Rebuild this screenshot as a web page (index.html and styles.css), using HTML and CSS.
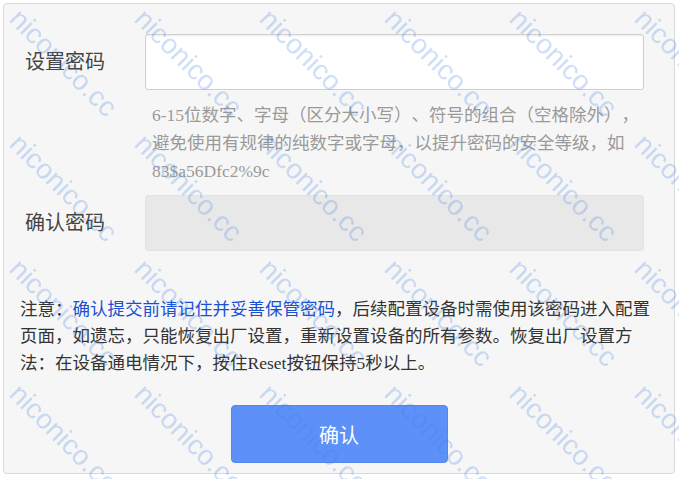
FILE: index.html
```html
<!DOCTYPE html>
<html lang="zh-CN">
<head>
<meta charset="utf-8">
<title>设置密码</title>
<link rel="stylesheet" href="styles.css">
</head>
<body>
<div class="panel">
  <div class="row">
    <label class="label">设置密码</label>
    <div class="field">
      <input class="input" type="password">
      <p class="hint">6-15位数字、字母（区分大小写）、符号的组合（空格除外），避免使用有规律的纯数字或字母，以提升密码的安全等级，如83$a56Dfc2%9c</p>
    </div>
  </div>
  <div class="row row-confirm">
    <label class="label">确认密码</label>
    <div class="field">
      <input class="input input-disabled" type="password" disabled>
    </div>
  </div>
  <p class="note">注意：<span class="link">确认提交前请记住并妥善保管密码</span>，后续配置设备时需使用该密码进入配置页面，如遗忘，只能恢复出厂设置，重新设置设备的所有参数。恢复出厂设置方法：在设备通电情况下，按住Reset按钮保持5秒以上。</p>
  <div class="actions">
    <button class="btn" type="button">确认</button>
  </div>
</div>
<div class="watermark">
  <span class="wm"><span>niconico.cc</span></span><span class="wm"><span>niconico.cc</span></span><span class="wm"><span>niconico.cc</span></span><span class="wm"><span>niconico.cc</span></span><span class="wm"><span>niconico.cc</span></span><span class="wm"><span>niconico.cc</span></span>
  <span class="wm"><span>niconico.cc</span></span><span class="wm"><span>niconico.cc</span></span><span class="wm"><span>niconico.cc</span></span><span class="wm"><span>niconico.cc</span></span><span class="wm"><span>niconico.cc</span></span><span class="wm"><span>niconico.cc</span></span>
  <span class="wm"><span>niconico.cc</span></span><span class="wm"><span>niconico.cc</span></span><span class="wm"><span>niconico.cc</span></span><span class="wm"><span>niconico.cc</span></span><span class="wm"><span>niconico.cc</span></span><span class="wm"><span>niconico.cc</span></span>
  <span class="wm"><span>niconico.cc</span></span><span class="wm"><span>niconico.cc</span></span><span class="wm"><span>niconico.cc</span></span><span class="wm"><span>niconico.cc</span></span><span class="wm"><span>niconico.cc</span></span><span class="wm"><span>niconico.cc</span></span>
</div>
</body>
</html>
```
FILE: styles.css
```css
html, body {
  margin: 0;
  padding: 0;
  background: #ffffff;
}
body {
  font-family: "Liberation Serif", "Noto Sans CJK SC", serif;
  color: #333;
  width: 679px;
  height: 479px;
  overflow: hidden;
  text-spacing-trim: space-all;
}
.panel {
  box-sizing: border-box;
  margin: 3px 0 0 3px;
  width: 672px;
  height: 471px;
  border: 1px solid #d9d9d9;
  border-radius: 4px;
  background: #f6f6f6;
  padding-top: 30px;
}
.row {
  display: flex;
  align-items: flex-start;
  padding-left: 21px;
}
.row-confirm {
  margin-top: 10px;
}
.label {
  width: 120px;
  flex-shrink: 0;
  height: 56px;
  line-height: 54px;
  font-family: "Noto Sans CJK SC", sans-serif;
  font-size: 20px;
  color: #444;
}
.field {
  width: 499px;
}
.input {
  display: block;
  box-sizing: border-box;
  width: 499px;
  height: 56px;
  margin: 0;
  border: 1px solid #cfcfcf;
  border-radius: 3px;
  background: #ffffff;
  box-shadow: inset 0 1px 2px rgba(0, 0, 0, 0.08);
  outline: none;
}
.input-disabled {
  background: #e8e8e8;
  border-color: #e3e3e3;
  box-shadow: none;
}
.hint {
  margin: 11px 0 0 0;
  padding-left: 7px;
  font-size: 17.5px;
  line-height: 28px;
  color: #9a9a9a;
}
.note {
  margin: 45px 14px 0 16px;
  font-size: 17.5px;
  line-height: 27px;
  color: #333;
}
.link {
  color: #1a50d2;
}
.actions {
  display: flex;
  justify-content: center;
  margin-top: 28px;
}
.btn {
  box-sizing: border-box;
  width: 217px;
  height: 58px;
  border: 1px solid #5286f2;
  border-radius: 4px;
  background: #5d91f8;
  color: #ffffff;
  font-family: "Noto Sans CJK SC", sans-serif;
  font-size: 20px;
  padding: 0;
}
.watermark {
  position: fixed;
  inset: 0;
  display: grid;
  grid-template-columns: repeat(6, 125px);
  grid-auto-rows: 125px;
  overflow: hidden;
  pointer-events: none;
}
.wm {
  display: flex;
  align-items: center;
  justify-content: center;
  overflow: visible;
}
.wm span {
  flex-shrink: 0;
  white-space: nowrap;
  font-family: "Liberation Sans", Arial, sans-serif;
  font-size: 28px;
  color: rgba(70, 130, 225, 0.26);
  transform: translate(1px, 0px) rotate(45deg);
}
```
